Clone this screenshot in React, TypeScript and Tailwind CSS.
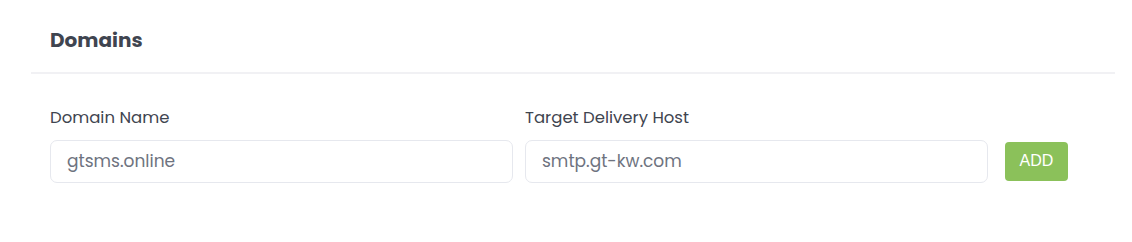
const App = () => {
    return (
        <div className="w-[1132px] h-[242px] bg-white font-['Poppins','Open_Sans',sans-serif] text-[#3f4254]">
            <div className="ml-[31px] w-[1084px] bg-white">
                <div className="h-[74px] border-b-2 border-[#f1f1f4] px-[19px] flex items-center pt-[7px]">
                    <h3 className="text-[20px] font-bold text-[#3f4550]">Domains</h3>
                </div>
                <div className="px-[19px] pt-[32px] flex items-end">
                    <div className="w-[463px]">
                        <label className="block text-[16.5px] text-[#3f4550] mb-[9px]">Domain Name</label>
                        <input
                            defaultValue="gtsms.online"
                            className="w-full h-[43px] border border-[#e6e8ee] rounded-[7px] px-[16px] text-[17px] text-[#6e7380] outline-none"
                        />
                    </div>
                    <div className="w-[463px] ml-[12px]">
                        <label className="block text-[16.5px] text-[#3f4550] mb-[9px]">Target Delivery Host</label>
                        <input
                            defaultValue="smtp.gt-kw.com"
                            className="w-full h-[43px] border border-[#e6e8ee] rounded-[7px] px-[16px] text-[17px] text-[#6e7380] outline-none"
                        />
                    </div>
                    <button className="ml-[17px] mb-[2px] w-[63px] h-[39px] rounded-[4px] bg-[#8bc15a] text-white text-[16px] font-['Liberation_Sans',sans-serif]">ADD</button>
                </div>
            </div>
        </div>
    )
}

export default App;
